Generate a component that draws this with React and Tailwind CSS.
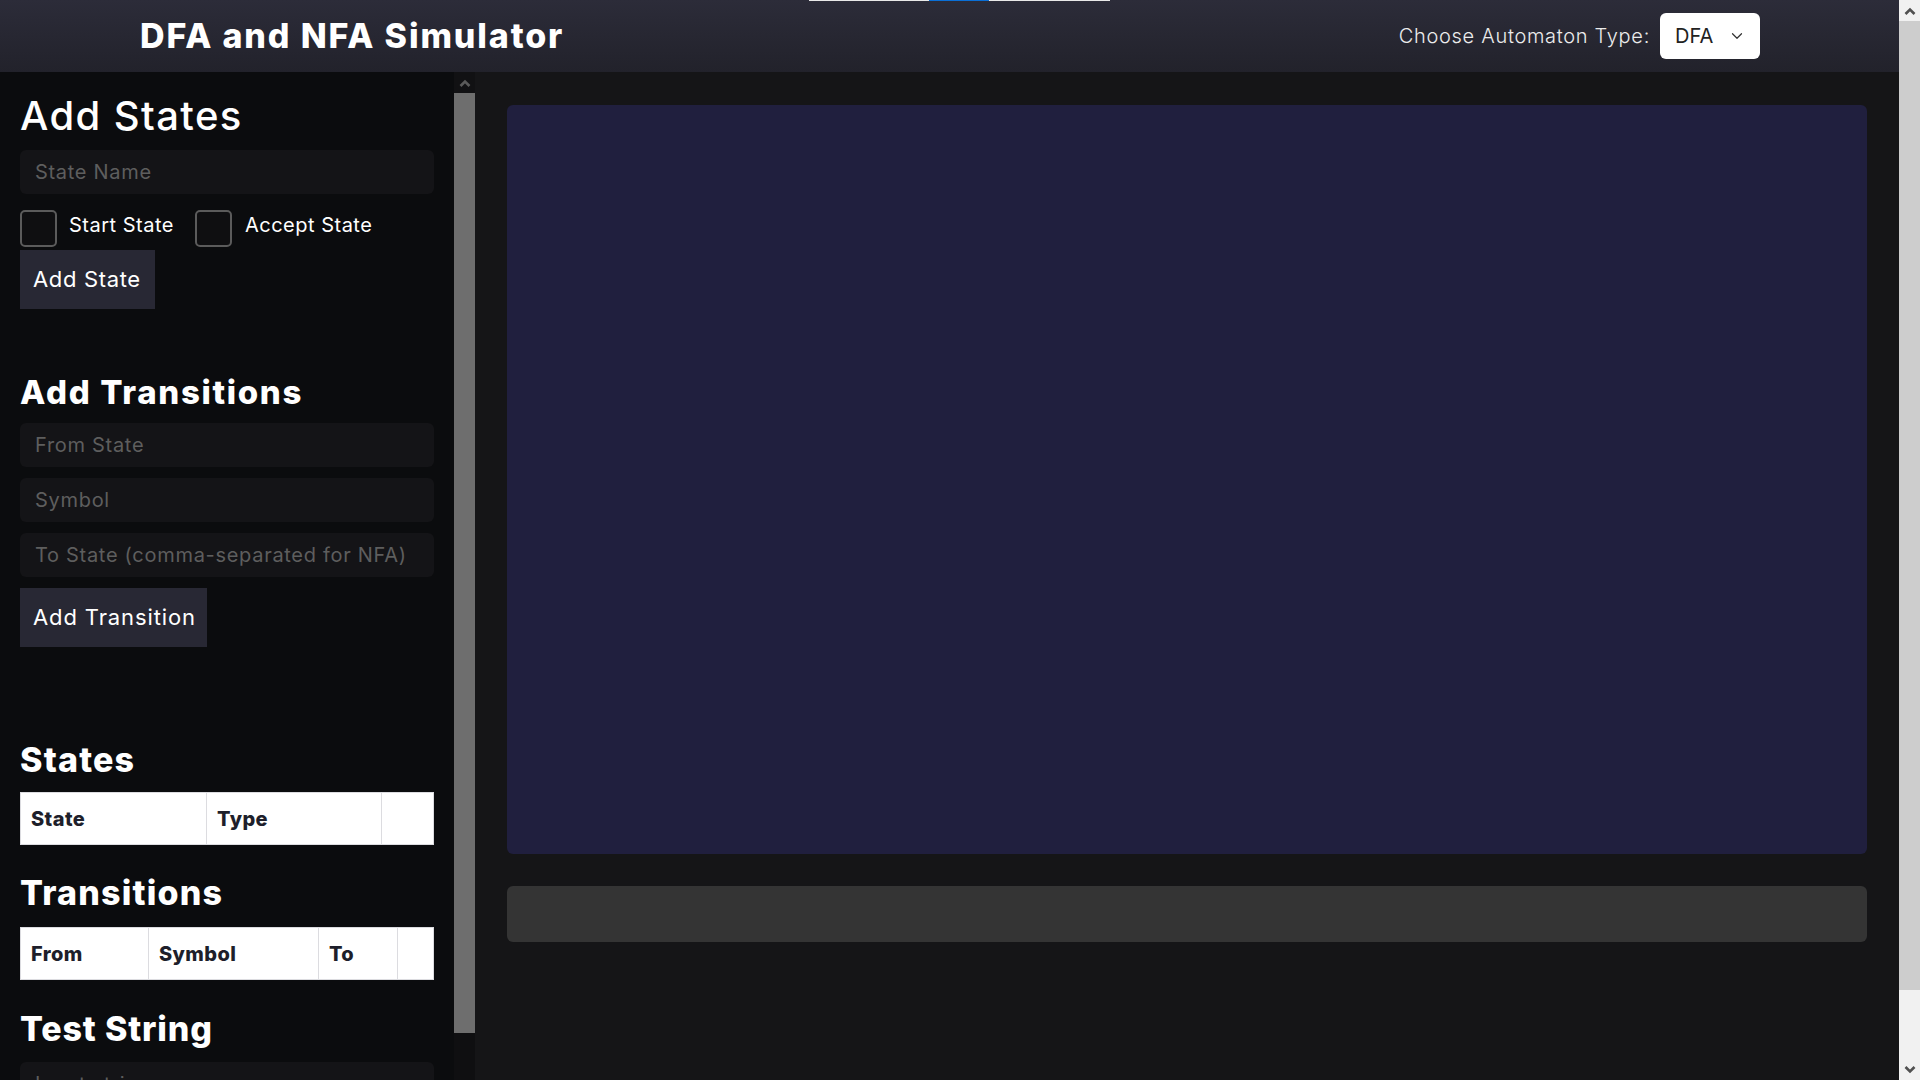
import { ChevronDown } from 'lucide-react';

function Field({ placeholder, className = '' }) {
  return (
    <input
      placeholder={placeholder}
      className={`block h-[44px] w-full rounded-md bg-[#141417] px-[15px] text-[20px] tracking-[0.035em] text-white outline-none placeholder:text-[#5e5e5e] ${className}`}
    />
  );
}

function Check({ className = '' }) {
  return (
    <input
      type="checkbox"
      className={`h-[37px] w-[37px] shrink-0 appearance-none rounded-[5px] border-2 border-[#5b5b5b] bg-[#0f0f11] ${className}`}
    />
  );
}

function Arrow({ down = false, color }) {
  return (
    <svg width="12" height="8" viewBox="0 0 12 8" className={down ? 'rotate-180' : ''}>
      <path d="M1.5 7 L6 2.5 L10.5 7" fill="none" stroke={color} strokeWidth="2.6" strokeLinejoin="miter" />
    </svg>
  );
}

function Th({ w, children }) {
  return (
    <th className={`${w} border border-[#dcdce0] pl-[10px] text-left text-[20px] font-extrabold tracking-[0.02em]`}>{children}</th>
  );
}

export default function App() {
  return (
    <div className="relative flex h-screen overflow-hidden bg-[#151517] font-['Inter',sans-serif] text-white">
      <div className="absolute left-[809px] top-0 z-10 flex h-px w-[301px] bg-[#e9e9e9]">
        <div className="ml-[120px] h-px w-[60px] bg-[#0a6fd6]" />
      </div>

      <div className="flex h-screen w-[1899px] shrink-0 flex-col overflow-hidden">
        <header className="flex h-[72px] shrink-0 items-center justify-between bg-linear-to-b from-[#2c2c39] to-[#22222b] pl-[140px] pr-[139px]">
          <h1 className="text-[34px] font-extrabold leading-none tracking-[0.055em]">DFA and NFA Simulator</h1>
          <div className="flex items-center gap-[10px]">
            <span className="text-[20px] font-light tracking-[0.035em] text-[#ececec]">Choose Automaton Type:</span>
            <div className="relative">
              <select className="h-[46px] w-[100px] appearance-none rounded-md bg-white pl-[15px] text-[20px] text-[#222] outline-none">
                <option>DFA</option>
                <option>NFA</option>
              </select>
              <ChevronDown className="pointer-events-none absolute right-[14px] top-[14px] h-[18px] w-[18px] text-[#333]" strokeWidth={1.6} />
            </div>
          </div>
        </header>

        <div className="flex min-h-0 flex-1">
          <div className="flex w-[475px] shrink-0">
            <aside className="w-[454px] shrink-0 overflow-hidden bg-[#0b0c0e] px-5 pt-6">
              <h2 className="text-[40px] font-medium leading-none tracking-[0.035em]">Add States</h2>
              <Field placeholder="State Name" className="mt-[14px]" />
              <div className="mt-4 flex h-[37px] items-start">
                <Check />
                <span className="ml-3 mt-[5px] text-[20px] leading-none tracking-[0.025em]">Start State</span>
                <Check className="ml-[21px]" />
                <span className="ml-[13px] mt-[5px] text-[20px] leading-none tracking-[0.025em]">Accept State</span>
              </div>
              <button className="mt-[3px] block h-[59px] w-[135px] bg-[#282834] pl-[13px] text-left text-[22px] tracking-[0.03em]">Add State</button>

              <h2 className="mt-[67px] text-[33px] font-extrabold leading-none tracking-[0.05em]">Add Transitions</h2>
              <div className="mt-[14px] flex flex-col gap-[11px]">
                <Field placeholder="From State" />
                <Field placeholder="Symbol" />
                <Field placeholder="To State (comma-separated for NFA)" />
              </div>
              <button className="mt-[11px] block h-[59px] w-[187px] bg-[#282834] pl-[13px] text-left text-[22px] tracking-[0.04em]">Add Transition</button>

              <h2 className="mt-[96px] text-[34px] font-extrabold leading-none tracking-[0.035em]">States</h2>
              <table className="mt-[15px] w-full table-fixed border-collapse bg-white text-[#1e1f2b]">
                <thead>
                  <tr className="h-[52px]">
                    <Th w="w-[186px]">State</Th>
                    <Th w="w-[175px]">Type</Th>
                    <th className="border border-[#dcdce0]" />
                  </tr>
                </thead>
              </table>

              <h2 className="mt-[31px] text-[34px] font-extrabold leading-none tracking-[0.035em]">Transitions</h2>
              <table className="mt-[17px] w-full table-fixed border-collapse bg-white text-[#1e1f2b]">
                <thead>
                  <tr className="h-[52px]">
                    <Th w="w-[128px]">From</Th>
                    <Th w="w-[170px]">Symbol</Th>
                    <Th w="w-[79px]">To</Th>
                    <th className="border border-[#dcdce0]" />
                  </tr>
                </thead>
              </table>

              <h2 className="mt-8 text-[34px] font-extrabold leading-none tracking-[0.025em]">Test String</h2>
              <Field placeholder="Input string" className="mt-4" />
            </aside>
            <div className="flex w-[21px] shrink-0 flex-col bg-[#0f0f11]">
              <div className="flex h-[21px] items-center justify-center bg-[#111113]">
                <Arrow color="#5a5a5a" />
              </div>
              <div className="h-[940px] bg-[#6e6e6e]" />
            </div>
          </div>

          <main className="flex-1 px-8 pt-[33px]">
            <div className="h-[749px] rounded-md bg-[#201f3e]" />
            <div className="mt-8 h-[56px] rounded-md bg-[#343434]" />
          </main>
        </div>
      </div>

      <div className="flex h-screen w-[21px] shrink-0 flex-col bg-[#f1f1f1]">
        <div className="flex h-[21px] items-center justify-center">
          <Arrow color="#505050" />
        </div>
        <div className="h-[969px] bg-[#cdcdcd]" />
        <div className="flex-1" />
        <div className="flex h-[21px] items-center justify-center">
          <Arrow down color="#505050" />
        </div>
      </div>
    </div>
  );
}
